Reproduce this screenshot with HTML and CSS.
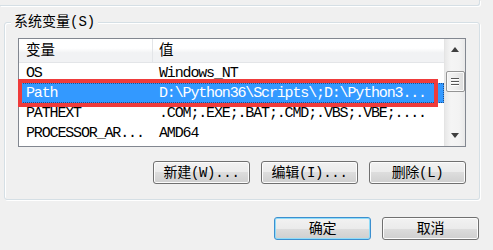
FILE: index.html
```html
<!DOCTYPE html>
<html lang="zh-CN">
<head>
<meta charset="utf-8">
<link rel="stylesheet" href="styles.css">
</head>
<body>
<div class="prev"></div>
<fieldset class="group">
  <legend class="group-title">系统变量(S)</legend>
  <div class="list">
    <div class="list-main">
      <div class="list-head">
        <div class="c1">变量</div>
        <div class="c2">值</div>
      </div>
      <div class="row"><div class="c1">OS</div><div class="c2">Windows_NT</div></div>
      <div class="row sel"><div class="c1">Path</div><div class="c2">D:\Python36\Scripts\;D:\Python3...</div></div>
      <div class="row"><div class="c1">PATHEXT</div><div class="c2">.COM;.EXE;.BAT;.CMD;.VBS;.VBE;....</div></div>
      <div class="row"><div class="c1">PROCESSOR_AR...</div><div class="c2">AMD64</div></div>
    </div>
    <div class="sb">
      <div class="sb-btn"><span class="arr-up"></span></div>
      <div class="sb-thumb"><span></span><span></span><span></span></div>
      <div class="sb-fill"></div>
      <div class="sb-btn"><span class="arr-down"></span></div>
    </div>
    <div class="mark"></div>
  </div>
  <div class="btns">
    <button class="btn">新建(W)...</button>
    <button class="btn">编辑(I)...</button>
    <button class="btn">删除(L)</button>
  </div>
</fieldset>
<div class="dlg-btns">
  <button class="btn default">确定</button>
  <button class="btn">取消</button>
</div>
</body>
</html>
```
FILE: styles.css
```css
html, body {
  margin: 0;
  padding: 0;
}
body {
  background: #f0f0f0;
  width: 493px;
  height: 250px;
  overflow: hidden;
  font-family: "Liberation Mono", "Noto Sans CJK SC", monospace;
  font-size: 14px;
  color: #000;
}
.prev {
  width: 480px;
  height: 6px;
  box-sizing: border-box;
  border-right: 1px solid #d5dfe5;
  border-bottom: 1px solid #d5dfe5;
  border-bottom-right-radius: 3px;
  box-shadow: 1px 1px 0 #fff;
}
.group {
  margin: 9px 0 0 4px;
  width: 476px;
  height: 185px;
  box-sizing: border-box;
  padding: 0 13px 15px 13px;
  border: 1px solid #d5dfe5;
  border-radius: 3px;
  box-shadow: inset 1px 1px 0 #fff, 1px 1px 0 #fff;
  min-width: 0;
}
.group-title {
  padding: 0 3px;
  margin-left: -7px;
  line-height: 14px;
  height: 14px;
  font-size: 14px;
  background: #f0f0f0;
}
.list {
  position: relative;
  margin-top: 9px;
  height: 109px;
  box-sizing: border-box;
  border: 1px solid #828790;
  background: #fff;
  display: flex;
}
.list-main {
  flex: 1;
  min-width: 0;
}
.list-head {
  display: flex;
  height: 24px;
  box-sizing: border-box;
  border-bottom: 1px solid #e3e5e8;
  background: linear-gradient(#ffffff 0%, #ffffff 40%, #f1f2f4 60%, #f1f2f4 100%);
  line-height: 24px;
  font-size: 14.5px;
}
.list-head .c1 {
  border-right: 1px solid #e3e5e8;
}
.c1 {
  width: 134px;
  flex: none;
  box-sizing: border-box;
  padding-left: 7px;
  white-space: nowrap;
  overflow: hidden;
}
.c2 {
  flex: 1;
  min-width: 0;
  padding-left: 6px;
  white-space: nowrap;
  overflow: hidden;
}
.row {
  display: flex;
  height: 20px;
  line-height: 22px;
  font-size: 15px;
  letter-spacing: -1.15px;
}
.row.sel {
  background: #3399ff;
  color: #fff;
  outline: 1px dotted #1d4f8f;
  outline-offset: -1px;
}
.sb {
  width: 21px;
  flex: none;
  display: flex;
  flex-direction: column;
  align-items: center;
  background: linear-gradient(90deg, #e8e8e8 0%, #f5f5f5 30%, #f3f3f3 70%, #e9e9e9 100%);
  border-left: 1px solid #e4e4e4;
  box-sizing: border-box;
}
.sb-btn {
  height: 21px;
  width: 100%;
  display: flex;
  align-items: center;
  justify-content: center;
  flex: none;
}
.arr-up {
  width: 0;
  height: 0;
  border-left: 4px solid transparent;
  border-right: 4px solid transparent;
  border-bottom: 5px solid #404040;
}
.arr-down {
  width: 0;
  height: 0;
  border-left: 4px solid transparent;
  border-right: 4px solid transparent;
  border-top: 5px solid #404040;
}
.sb-thumb {
  margin-top: 11px;
  width: 19px;
  height: 21px;
  box-sizing: border-box;
  border: 1px solid #959595;
  border-radius: 2px;
  background: linear-gradient(90deg, #f4f4f4 0%, #ececec 50%, #dcdcdc 100%);
  box-shadow: inset 0 0 0 1px #fafafa;
  display: flex;
  flex-direction: column;
  align-items: center;
  justify-content: center;
  gap: 2px;
  flex: none;
}
.sb-thumb span {
  width: 8px;
  height: 1px;
  background: #555;
  box-shadow: 0 1px 0 #fff;
}
.sb-fill {
  flex: 1;
}
.mark {
  position: absolute;
  left: -1px;
  top: 40px;
  width: 420px;
  height: 28px;
  box-sizing: border-box;
  border: 4px solid #ef3b3b;
  pointer-events: none;
}
.btns {
  display: flex;
  justify-content: flex-end;
  gap: 11px;
  margin-top: 14px;
}
.btn {
  width: 97px;
  height: 23px;
  box-sizing: border-box;
  padding: 0;
  font-family: "Liberation Mono", "Noto Sans CJK SC", monospace;
  font-size: 14px;
  letter-spacing: -0.3px;
  line-height: 20px;
  color: #000;
  border: 1px solid #707070;
  border-radius: 3px;
  background: linear-gradient(#f2f2f2 0%, #ebebeb 50%, #dddddd 50%, #cfcfcf 100%);
  box-shadow: inset 0 0 0 1px #fcfcfc;
}
.btn.default {
  border-color: #3c8fcf;
  box-shadow: inset 0 0 0 1px #8fdcf9;
}
.dlg-btns {
  width: 479px;
  display: flex;
  justify-content: flex-end;
  gap: 11px;
  margin-top: 17px;
}
```
